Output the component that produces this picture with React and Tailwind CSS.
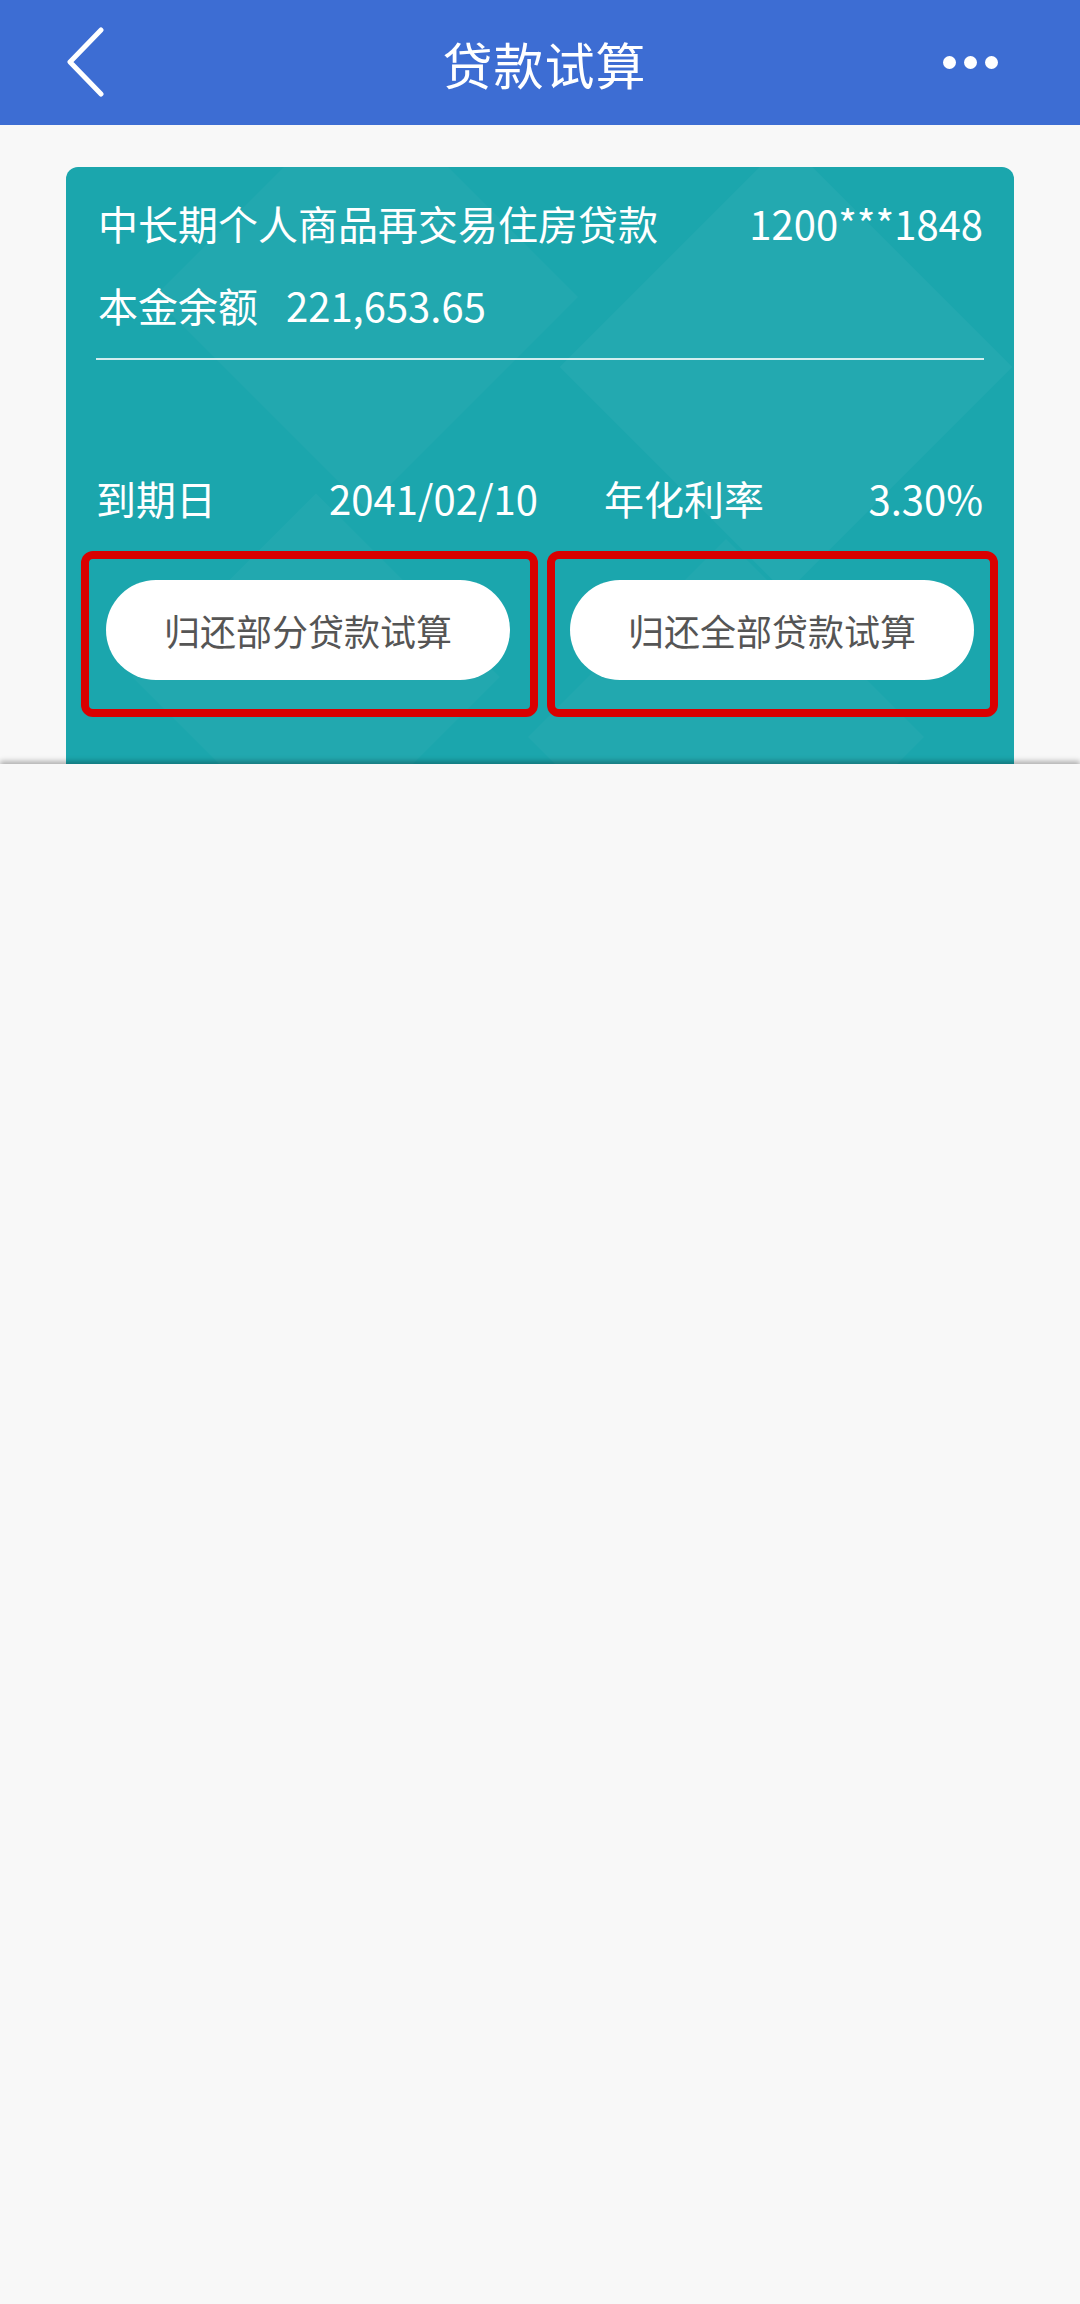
const font = { fontFamily: '"Noto Sans CJK SC", "Noto Sans", sans-serif' };

export default function App() {
  return (
    <div className="min-h-[2304px] w-[1080px] bg-[#f8f8f8] overflow-hidden" style={font}>
      {/* header */}
      <header className="h-[125px] bg-[#3d6dd3] flex items-center justify-between pl-[64px] pr-[82px] text-white">
        <svg width="42" height="70" viewBox="0 0 42 70" fill="none" className="mt-[-2px]">
          <path d="M37 3 L6 35 L37 67" stroke="white" strokeWidth="5" strokeLinecap="round" strokeLinejoin="round" />
        </svg>
        <h1 className="text-[50px] leading-none tracking-[1px] ml-[40px]">贷款试算</h1>
        <div className="flex gap-[8px]">
          <span className="w-[13px] h-[13px] rounded-full bg-white" />
          <span className="w-[13px] h-[13px] rounded-full bg-white" />
          <span className="w-[13px] h-[13px] rounded-full bg-white" />
        </div>
      </header>

      <main className="pt-[42px] px-[66px]">
        <div className="relative h-[597px] rounded-t-[12px] bg-[#1ba6ad] overflow-hidden text-white">
          {/* faint diamond pattern */}
          <div className="absolute left-[150px] top-[-20px] w-[300px] h-[300px] rotate-45 bg-white/[0.03]" />
          <div className="absolute left-[560px] top-[40px] w-[320px] h-[320px] rotate-45 bg-white/[0.04]" />
          <div className="absolute left-[120px] top-[380px] w-[260px] h-[260px] rotate-45 bg-white/[0.03]" />
          <div className="absolute left-[520px] top-[430px] w-[280px] h-[280px] rotate-45 bg-white/[0.03]" />

          <div className="relative">
            <div className="flex justify-between items-center pl-[32px] pr-[31px] pt-[28px] text-[40px] leading-[56px]">
              <span>中长期个人商品再交易住房贷款</span>
              <span>1200***1848</span>
            </div>
            <div className="flex items-center pl-[32px] mt-[26px] text-[40px] leading-[56px]">
              <span>本金余额</span>
              <span className="ml-[28px]">221,653.65</span>
            </div>
            <div className="mx-[30px] mt-[25px] h-[2px] bg-white/80" />

            <div className="flex items-center pl-[30px] pr-[31px] mt-[110px] text-[40px] leading-[56px]">
              <div className="w-[442px] flex justify-between">
                <span>到期日</span>
                <span>2041/02/10</span>
              </div>
              <div className="flex-1 ml-[66px] flex justify-between">
                <span>年化利率</span>
                <span>3.30%</span>
              </div>
            </div>

            <div className="flex gap-[9px] ml-[15px] mt-[25px]">
              <div className="w-[457px] h-[166px] border-[8px] border-[#d90000] rounded-[12px] pl-[17px] pr-[20px] pt-[21px]">
                <button className="w-full h-[100px] rounded-full bg-white text-[#555] text-[36px]">
                  归还部分贷款试算
                </button>
              </div>
              <div className="w-[451px] h-[166px] border-[8px] border-[#d90000] rounded-[12px] pl-[15px] pr-[16px] pt-[21px]">
                <button className="w-full h-[100px] rounded-full bg-white text-[#555] text-[36px]">
                  归还全部贷款试算
                </button>
              </div>
            </div>
          </div>
        </div>
      </main>

      {/* bottom sheet */}
      <div className="relative z-10 h-[1540px] bg-[#f8f8f8] shadow-[0_-3px_5px_rgba(0,0,0,0.28)]" />
    </div>
  );
}
